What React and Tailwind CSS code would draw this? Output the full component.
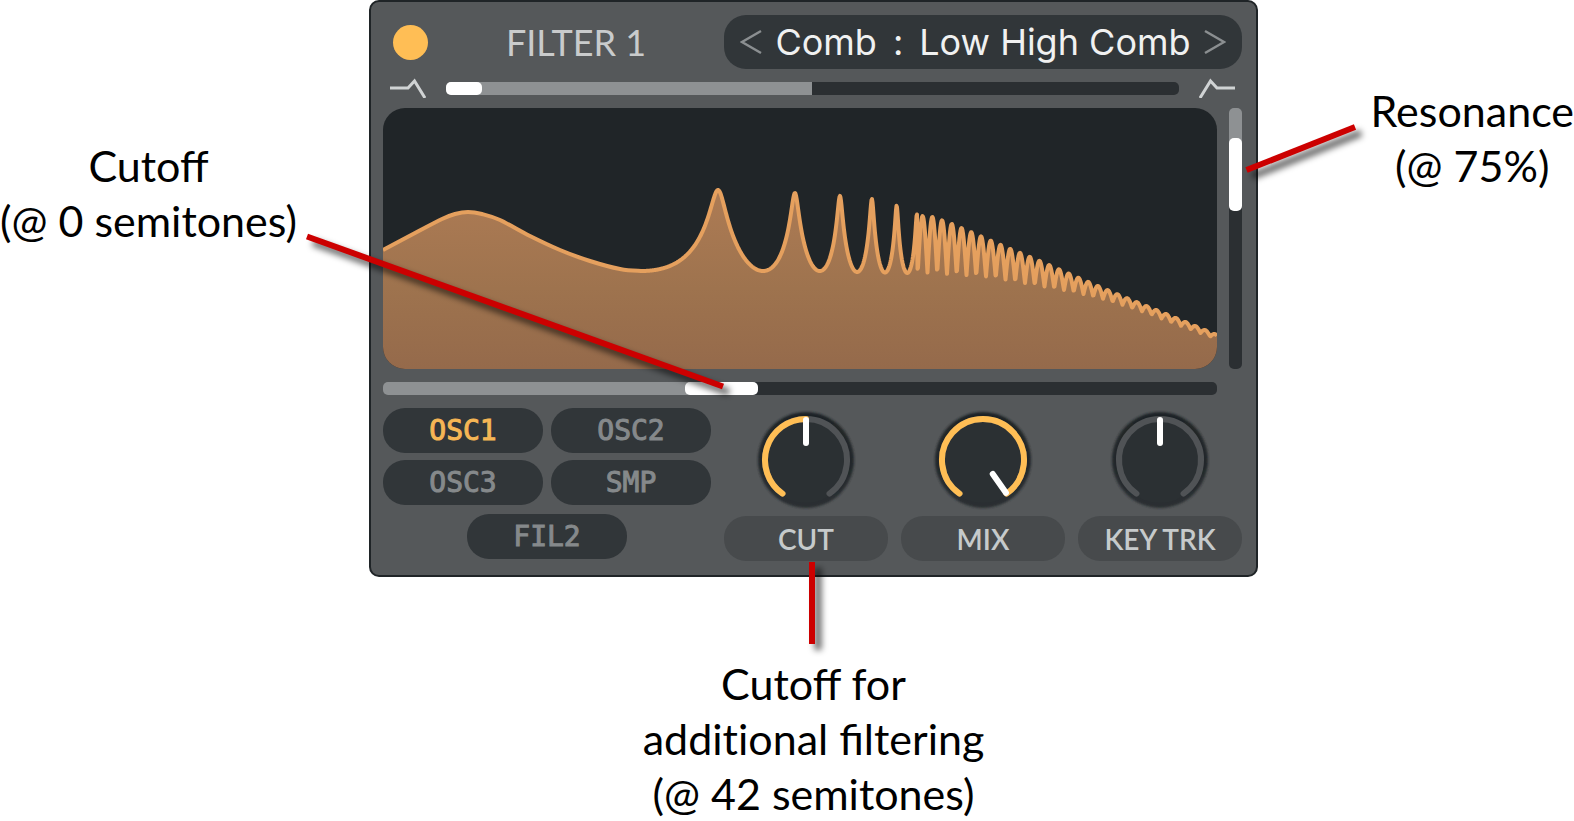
import React, { useState } from 'react';

const sources = ['OSC1', 'OSC2', 'OSC3', 'SMP'];

const presets = ['Low High Comb', 'Low High Flange', 'Band Comb'];

// Low end of the response, up to the first notch of the comb
const lowEnd = [
  [0, 142], [32, 125], [59, 111], [72, 106], [85, 104], [99, 106], [117, 112],
  [147, 128], [177, 142], [207, 153], [237, 161], [258, 163],
];

// Envelopes of the comb: [x, y]
const peaks = [
  [258, 82], [335, 82], [412, 85], [458, 88], [490, 91], [515, 98], [538, 108], [550, 109], [569, 116],
  [588, 124], [618, 137], [657, 153], [696, 170], [734, 186], [793, 210], [834, 227],
];
const notches = [
  [258, 163], [437, 163], [475, 164], [526, 165], [545, 165], [607, 169], [652, 177],
  [692, 184], [717, 190], [734, 195], [767, 206], [793, 216], [834, 231],
];

function lerp(points, x) {
  let i = 1;
  while (i < points.length - 1 && points[i][0] < x) i++;
  const [x0, y0] = points[i - 1];
  const [x1, y1] = points[i];
  return y0 + ((y1 - y0) * (x - x0)) / (x1 - x0);
}

function combShape(phase) {
  const g = 0.7;
  const level = (c) => Math.log(1 + g * g - 2 * g * c);
  return (level(-1) - level(Math.cos(2 * Math.PI * phase))) / (level(-1) - level(1));
}

function buildCurve() {
  let d = `M${lowEnd[0][0]} ${lowEnd[0][1]}`;
  for (let i = 0; i < lowEnd.length - 1; i++) {
    const p0 = lowEnd[Math.max(i - 1, 0)];
    const p1 = lowEnd[i];
    const p2 = lowEnd[i + 1];
    const p3 = lowEnd[i + 2] || [p2[0] + 20, p2[1]];
    d += `C${p1[0] + (p2[0] - p0[0]) / 6} ${p1[1] + (p2[1] - p0[1]) / 6} ${p2[0] - (p3[0] - p1[0]) / 6} ${p2[1] - (p3[1] - p1[1]) / 6} ${p2[0]} ${p2[1]}`;
  }
  for (let x = 259; x <= 834; x += 0.5) {
    const s = x < 534.5
      ? combShape(Math.exp((x - 335) / 111))
      : ((1 + Math.cos((2 * Math.PI * (x - 539.6)) / 9.75)) / 2) ** 0.5;
    const low = lerp(notches, x);
    d += `L${x} ${(low - (low - lerp(peaks, x)) * s).toFixed(2)}`;
  }
  return d;
}

const curve = buildCurve();

function FilterDisplay() {
  return (
    <div className="flex-1 min-w-0 h-[261px] rounded-[22px] overflow-hidden bg-[#202528]">
      <svg viewBox="0 0 834 261" preserveAspectRatio="none" className="block w-full h-full">
        <defs>
          <linearGradient id="curve-fill" x1="0" y1="82" x2="0" y2="261" gradientUnits="userSpaceOnUse">
            <stop offset="0" stopColor="#ad7b54" />
            <stop offset="0.55" stopColor="#9e734e" />
            <stop offset="1" stopColor="#956a4b" />
          </linearGradient>
        </defs>
        <path d={`${curve}L834 261L0 261Z`} fill="url(#curve-fill)" />
        <path d={curve} fill="none" stroke="#e5a05e" strokeWidth="4" strokeLinejoin="round" />
      </svg>
    </div>
  );
}

// start/end are degrees clockwise from the top
function arc(start, end) {
  const point = (deg) => {
    const a = (deg * Math.PI) / 180;
    return `${52 + 41 * Math.sin(a)} ${52 - 41 * Math.cos(a)}`;
  };
  return `M${point(start)}A41 41 0 ${end - start > 180 ? 1 : 0} 1 ${point(end)}`;
}

function Knob({ id, label, initial, bipolar }) {
  const [value, setValue] = useState(initial);
  const angle = -145 + value * 2.9;

  return (
    <div className="flex flex-col items-center gap-1">
      <div className="relative">
        <svg viewBox="0 0 104 104" className="block w-[104px] h-[104px]">
          <defs>
            <linearGradient id={`${id}-rim`} x1="0" y1="0" x2="0" y2="1">
              <stop offset="0" stopColor="#1f2427" />
              <stop offset="0.5" stopColor="#22272a" />
              <stop offset="1" stopColor="#2b3033" />
            </linearGradient>
            <filter id={`${id}-soft`}>
              <feGaussianBlur stdDeviation="1" />
            </filter>
          </defs>
          <circle cx="52" cy="52" r="48" fill={`url(#${id}-rim)`} filter={`url(#${id}-soft)`} />
          <circle cx="52" cy="52" r="43" fill="#2b3033" />
          <path d={arc(-145, 145)} fill="none" stroke="#505356" strokeWidth="6" strokeLinecap="round" />
          {!bipolar && value > 0 && (
            <path d={arc(-145, angle)} fill="none" stroke="#ffbe55" strokeWidth="6" strokeLinecap="round" />
          )}
          <path
            d="M52 12V35"
            stroke="#ffffff"
            strokeWidth="6"
            strokeLinecap="round"
            transform={`rotate(${angle} 52 52)`}
          />
        </svg>
        <input
          id={id}
          type="range"
          value={value}
          onChange={(e) => setValue(Number(e.target.value))}
          className="absolute inset-0 w-full h-full opacity-0 cursor-pointer"
        />
      </div>
      <label
        htmlFor={id}
        className="w-full h-[45px] rounded-[22px] bg-[#474a4c] flex items-center justify-center font-['Lato',sans-serif] text-[28px] leading-none font-semibold text-[#c6cacb] whitespace-nowrap"
      >
        {label}
      </label>
    </div>
  );
}

function SourceButton({ name, active, onClick }) {
  return (
    <button
      type="button"
      aria-pressed={active}
      onClick={onClick}
      className={`block h-[45px] w-full rounded-[22px] bg-[#313639] font-['DejaVu_Sans_Mono',monospace] text-[28px] leading-none [-webkit-text-stroke:1px] ${
        active ? 'text-[#f5b655]' : 'text-[#85898b]'
      }`}
    >
      {name}
    </button>
  );
}

function Callouts() {
  const lines = [
    'M-62 236.5L354 386.5',
    'M877.5 170L986 127',
    'M443 562V644',
  ];
  return (
    <svg viewBox="0 0 889 577" className="absolute -inset-[2px] w-[calc(100%+4px)] h-[calc(100%+4px)] overflow-visible pointer-events-none">
      <defs>
        <filter id="callout-blur" x="-200" y="0" width="1400" height="700" filterUnits="userSpaceOnUse">
          <feGaussianBlur stdDeviation="3" />
        </filter>
      </defs>
      <g fill="none" stroke="#000000" strokeOpacity="0.6" strokeWidth="7" transform="translate(6 6)" filter="url(#callout-blur)">
        {lines.map((d) => <path key={d} d={d} />)}
      </g>
      <g fill="none" stroke="#cc0000" strokeWidth="6">
        {lines.map((d) => <path key={d} d={d} />)}
      </g>
    </svg>
  );
}

export default function App() {
  const [enabled, setEnabled] = useState(true);
  const [preset, setPreset] = useState(0);
  const [routed, setRouted] = useState(['OSC1']);

  const step = (n) => setPreset((preset + n + presets.length) % presets.length);
  const toggle = (name) =>
    setRouted(routed.includes(name) ? routed.filter((r) => r !== name) : [...routed, name]);

  return (
    <main className="w-full bg-white grid grid-cols-[369fr_889fr_316fr] font-['Lato',sans-serif] text-[43px] leading-[55px] text-black overflow-hidden">
      <div className="flex justify-start items-start pt-[138px]">
        <p className="text-center whitespace-nowrap">
          Cutoff
          <br />
          (@ 0 semitones)
        </p>
      </div>

      <section className="relative z-10 rounded-[10px] border-2 border-[#1f2427] bg-[#55585a] pt-[13px] pl-3 pr-[14px] pb-[14px]">
        {/* Header */}
        <div className="flex items-center pl-[10px]">
          <button
            type="button"
            aria-label="Filter 1 on/off"
            aria-pressed={enabled}
            onClick={() => setEnabled(!enabled)}
            className={`size-[35px] rounded-full ${enabled ? 'bg-[#ffbe55]' : 'bg-[#313639]'}`}
          />
          <h1 className="flex-1 text-center text-[36px] leading-none font-normal text-[#c9cbcc] whitespace-nowrap">FILTER 1</h1>
          <div className="w-[518px] h-[54px] rounded-[22px] bg-[#313639] flex items-center justify-between px-4">
            <button type="button" aria-label="Previous filter" onClick={() => step(-1)}>
              <svg viewBox="0 0 22 26" className="w-[22px] h-[26px]" fill="none" stroke="#8b8f91" strokeWidth="2.5">
                <path d="M21 2L2 13L21 24" />
              </svg>
            </button>
            <div className="flex gap-4 font-['Inter',sans-serif] font-normal text-[36px] leading-none text-[#f0f1f1] whitespace-nowrap">
              <span>Comb</span>
              <span>:</span>
              <span>{presets[preset]}</span>
            </div>
            <button type="button" aria-label="Next filter" onClick={() => step(1)}>
              <svg viewBox="0 0 22 26" className="w-[22px] h-[26px]" fill="none" stroke="#8b8f91" strokeWidth="2.5">
                <path d="M1 2L20 13L1 24" />
              </svg>
            </button>
          </div>
        </div>

        {/* Low / high blend */}
        <div className="mt-[9px] px-[7px] flex items-center gap-5">
          <svg viewBox="0 0 36 20" className="w-9 h-5 shrink-0" fill="none" stroke="#d0d3d4" strokeWidth="3">
            <path d="M0 10H18L24.500 3L35 20" />
          </svg>
          <input
            type="range"
            aria-label="Blend"
            defaultValue={0}
            className="appearance-none flex-1 min-w-0 h-[13px] rounded-[5px] bg-[linear-gradient(to_right,#8e9193_50%,#2b2f32_50%)] [&::-webkit-slider-thumb]:appearance-none [&::-webkit-slider-thumb]:w-9 [&::-webkit-slider-thumb]:h-[13px] [&::-webkit-slider-thumb]:rounded-[5px] [&::-webkit-slider-thumb]:bg-white"
          />
          <svg viewBox="0 0 36 20" className="w-9 h-5 shrink-0" fill="none" stroke="#d0d3d4" strokeWidth="3">
            <path d="M1 20L11.500 3L18 10H36" />
          </svg>
        </div>

        {/* Response and resonance */}
        <div className="mt-[10px] flex gap-3">
          <FilterDisplay />
          <input
            type="range"
            aria-label="Resonance"
            defaultValue={84}
            className="appearance-none [writing-mode:vertical-lr] [direction:rtl] w-[13px] h-[261px] rounded-[5px] bg-[linear-gradient(to_bottom,#8e9193_25%,#2b2f32_25%)] [&::-webkit-slider-thumb]:appearance-none [&::-webkit-slider-thumb]:w-[13px] [&::-webkit-slider-thumb]:h-[73px] [&::-webkit-slider-thumb]:rounded-[5px] [&::-webkit-slider-thumb]:bg-white"
          />
        </div>

        {/* Cutoff */}
        <div className="mt-[13px] pr-[25px] flex">
          <input
            type="range"
            aria-label="Cutoff"
            max={1000}
            defaultValue={397}
            className="appearance-none flex-1 min-w-0 h-[13px] rounded-[5px] bg-[linear-gradient(to_right,#8e9193_40%,#2b2f32_40%)] [&::-webkit-slider-thumb]:appearance-none [&::-webkit-slider-thumb]:w-[73px] [&::-webkit-slider-thumb]:h-[13px] [&::-webkit-slider-thumb]:rounded-[5px] [&::-webkit-slider-thumb]:bg-white"
          />
        </div>

        <div className="mt-[13px] flex gap-[13px]">
          <div className="flex-1 min-w-0">
            <div className="grid grid-cols-2 gap-x-2 gap-y-[7px]">
              {sources.map((name) => (
                <SourceButton key={name} name={name} active={routed.includes(name)} onClick={() => toggle(name)} />
              ))}
            </div>
            <div className="mt-[9px] w-[160px] mx-auto">
              <SourceButton name="FIL2" active={routed.includes('FIL2')} onClick={() => toggle('FIL2')} />
            </div>
          </div>

          <div className="w-[518px] grid grid-cols-3 gap-[13px]">
            <Knob id="cut" label="CUT" initial={50} />
            <Knob id="mix" label="MIX" initial={100} />
            <Knob id="key-trk" label="KEY TRK" initial={50} bipolar />
          </div>
        </div>

        <Callouts />
      </section>

      <div className="flex justify-end items-start pt-[83px]">
        <p className="text-center whitespace-nowrap">
          Resonance
          <br />
          (@ 75%)
        </p>
      </div>

      <p className="col-start-2 mt-[79px] text-center whitespace-nowrap">
        Cutoff for
        <br />
        addi<span className="[font-variant-ligatures:none]">ti</span>onal filtering
        <br />
        (@ 42 semitones)
      </p>
    </main>
  );
}
